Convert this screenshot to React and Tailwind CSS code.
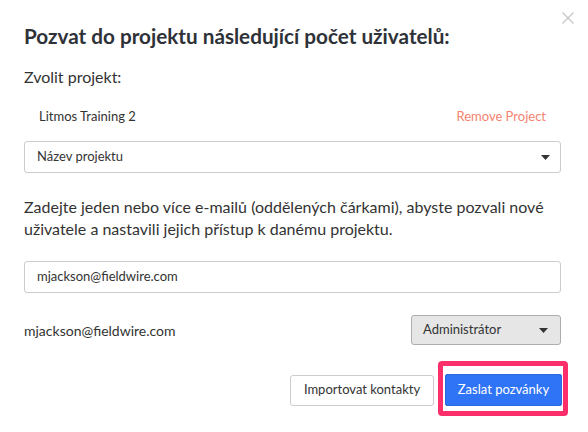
import React from 'react'

const Caret = () => (
  <svg width="9" height="5" viewBox="0 0 9 5" className="shrink-0">
    <path d="M0 0h9L4.5 5z" fill="#333" />
  </svg>
)

const App = () => {
  return (
    <div className="relative w-[588px] h-[432px] bg-white text-[#333] font-['Lato','Liberation_Sans',sans-serif] overflow-hidden">
      <button className="absolute top-[12px] right-[14px] w-[12px] h-[12px]">
        <svg width="12" height="12" viewBox="0 0 12 12">
          <path d="M0.5 0.5l11 11M11.5 0.5l-11 11" stroke="#c4c4c4" strokeWidth="1.2" />
        </svg>
      </button>

      <div className="pl-[24px] pr-[27px] pt-[22px]">
        <h2 className="text-[20.7px] leading-[28px] font-bold text-[#2e3238]">
          Pozvat do projektu následující počet uživatelů:
        </h2>

        <p className="mt-[15px] text-[16px] leading-[24px]">Zvolit projekt:</p>

        <div className="mt-[17px] flex justify-between items-center px-[15px] text-[13px] leading-[20px]">
          <span>Litmos Training 2</span>
          <span className="text-[#f5826f] cursor-pointer">Remove Project</span>
        </div>

        <div className="mt-[15px] h-[32px] flex items-center justify-between border border-[#ccc] rounded-[3px] pl-[12px] pr-[10px] text-[13px]">
          <span>Název projektu</span>
          <Caret />
        </div>

        <p className="mt-[23px] text-[16px] leading-[22px]">
          Zadejte jeden nebo více e-mailů (oddělených čárkami), abyste pozvali nové uživatele a nastavili jejich přístup k danému projektu.
        </p>

        <div className="mt-[21px] h-[32px] flex items-center border border-[#ccc] rounded-[3px] pl-[12px] text-[13px]">
          mjackson@fieldwire.com
        </div>

        <div className="mt-[22px] flex items-center justify-between">
          <span className="text-[14px]">mjackson@fieldwire.com</span>
          <div className="w-[150px] h-[30px] flex items-center justify-between bg-[#e6e6e6] border border-[#adadad] rounded-[3px] pl-[11px] pr-[12px] text-[13px]">
            <span>Administrátor</span>
            <Caret />
          </div>
        </div>
      </div>

      <div className="mt-[29px] pr-[26px] flex justify-end items-center gap-[11px]">
        <button className="w-[144px] h-[31px] border border-[#ccc] rounded-[3px] bg-white text-[13px] text-[#333]">
          Importovat kontakty
        </button>
        <div className="relative">
          <div className="absolute left-[-7px] right-[-6px] top-[-13px] bottom-[-10px] border-[5px] border-[#fc2f6b] rounded-[4px]" />
          <button className="relative w-[117px] h-[32px] bg-[#2f74f6] border border-[#2a68dc] rounded-[2px] text-white text-[13px]">
            Zaslat pozvánky
          </button>
        </div>
      </div>
    </div>
  )
}

export default App
